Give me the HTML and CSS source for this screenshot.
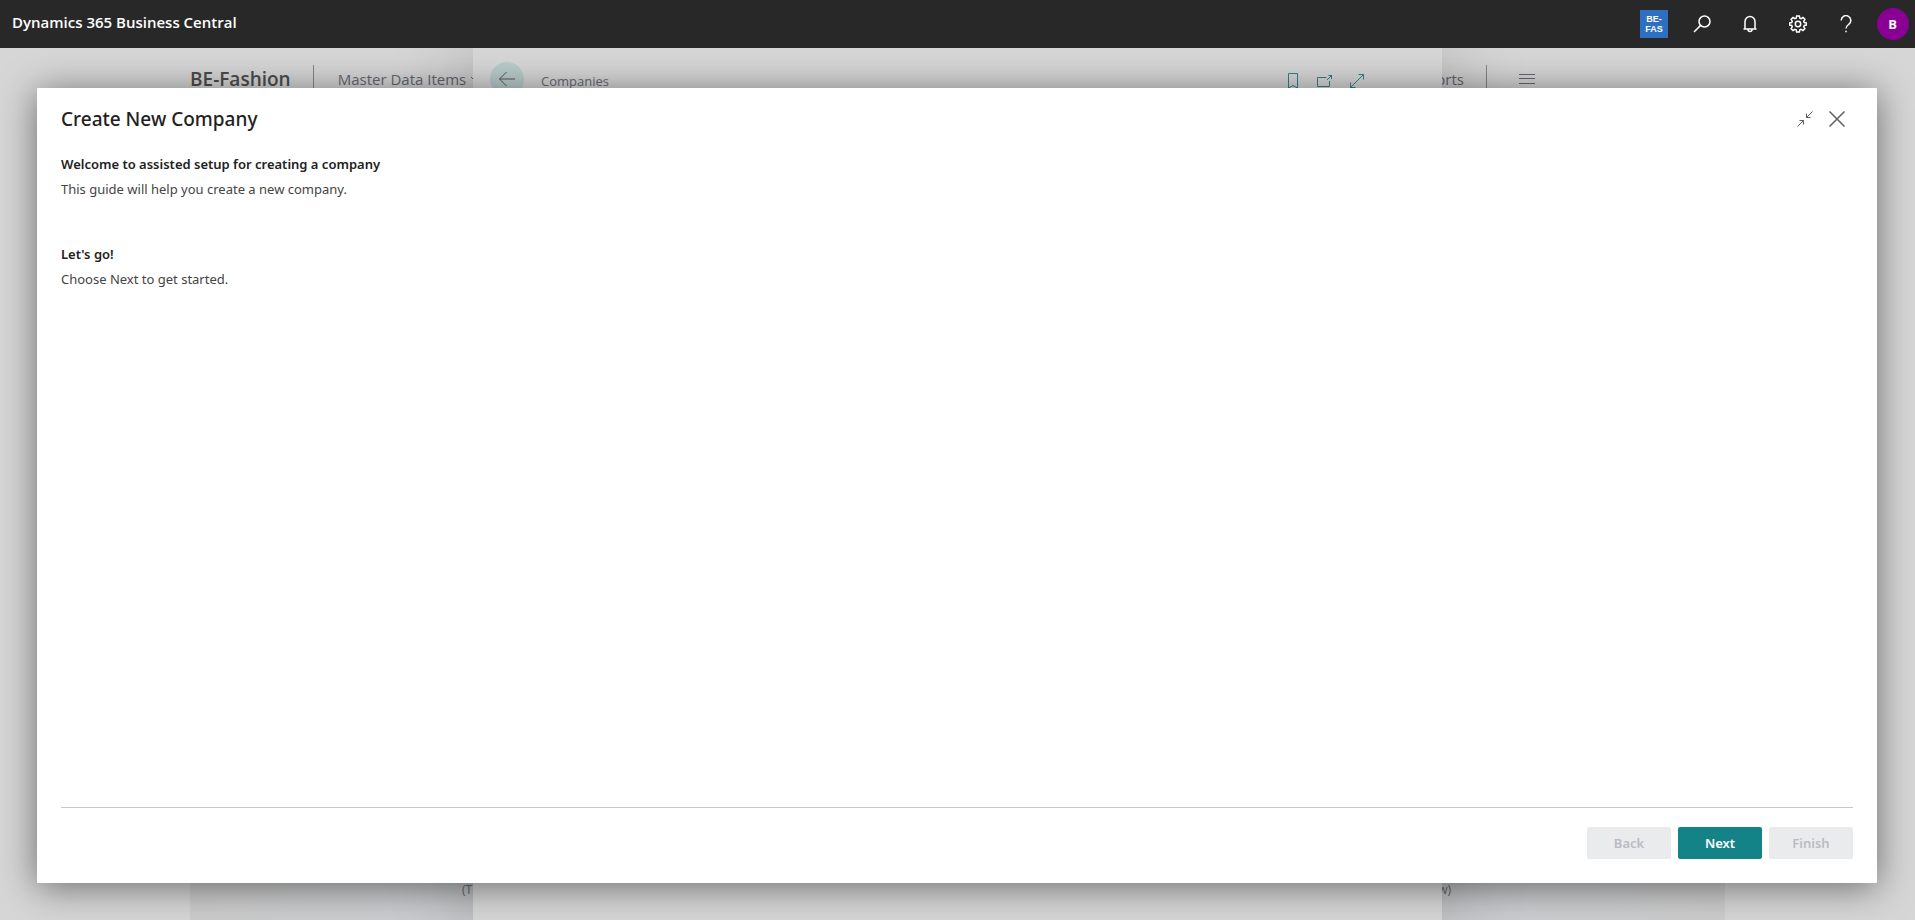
FILE: index.html
```
<!DOCTYPE html>
<html lang="en">
<head>
  <meta charset="UTF-8" />
  <meta name="viewport" content="width=device-width, initial-scale=1.0"/>
  <title>Dynamics 365 Business Central</title>
  <link rel="stylesheet" href="styles.css">
</head>
<body>

<header class="topbar">
  <a class="product" href="#">Dynamics 365 Business Central</a>
  <div class="tools">
    <button class="tool" type="button" aria-label="Company"><span class="company-badge"><span>BE-</span><span>FAS</span></span></button>
    <button class="tool" type="button" aria-label="Search">
      <svg width="18" height="18" viewBox="0 0 18 18"><circle cx="11.5" cy="6.5" r="5.5"/><path d="M7.6 10.4L1 17"/></svg>
    </button>
    <button class="tool" type="button" aria-label="Notifications">
      <svg width="18" height="18" viewBox="0 0 18 18"><path d="M4 14V6.500a5 5 0 0 1 10 0V14M2.500 14h13M7 14.500a2 2 0 0 0 4 0"/></svg>
    </button>
    <button class="tool" type="button" aria-label="Settings">
      <svg width="18" height="18" viewBox="0 0 18 18"><path d="M7.600 1h2.800l.4 2.200 1.300.5 1.900-1.200 1.900 1.900-1.200 1.900.6 1.300 2.200.4v2l-2.200.5-.6 1.300 1.200 1.900-1.900 1.900-1.900-1.200-1.300.5-.4 2.200H7.600l-.4-2.200-1.300-.5L4 15.600l-1.900-1.900 1.200-1.900-.6-1.300L.5 10V8l2.200-.4.6-1.300-1.200-1.900L4 2.500l1.900 1.200 1.300-.5z"/><circle cx="9" cy="9" r="2.700"/></svg>
    </button>
    <button class="tool" type="button" aria-label="Help">
      <svg width="18" height="18" viewBox="0 0 18 18"><path d="M4.200 5.500a4.800 4.800 0 1 1 7.800 3.700C10.200 10.700 9 11.300 9 13.500M9 15.800v1.400"/></svg>
    </button>
    <button class="tool" type="button" aria-label="Account"><span class="avatar">B</span></button>
  </div>
</header>

<main class="stage">

  <!-- role center -->
  <div class="home">
    <nav class="home-nav">
      <a class="company" href="#">BE-Fashion</a>
      <span class="divider"></span>
      <a class="menu-item" href="#">Master Data Items
        <svg width="10" height="10" viewBox="0 0 10 10"><path d="M1 3l4 4 4-4"/></svg>
      </a>
      <a class="menu-item last" href="#">Reports</a>
      <span class="divider"></span>
      <button class="more" type="button" aria-label="More">
        <svg width="16" height="10" viewBox="0 0 16 10"><path d="M0 .5h16M0 4.500h16M0 9.500h16"/></svg>
      </button>
    </nav>
    <div class="banner">
      <span>(Th</span>
      <span>w)</span>
    </div>
  </div>

  <!-- companies list -->
  <section class="panel">
    <button class="back" type="button" aria-label="Go back">
      <svg width="18" height="16" viewBox="0 0 18 16"><path d="M17 8H1.500M8.500 1l-7 7 7 7"/></svg>
    </button>
    <span class="panel-title">Companies</span>
    <div class="panel-tools">
      <button type="button" aria-label="Bookmark"><svg width="16" height="16" viewBox="0 0 16 16"><path d="M3.500.5h9v14.500L8 12.500 3.500 15z"/></svg></button>
      <button type="button" aria-label="Open in new window"><svg width="16" height="16" viewBox="0 0 16 16"><path d="M9.500 4.500h-9v9h12V8M10 7l5-5M11.500 2.500h3V6"/></svg></button>
      <button type="button" aria-label="Expand"><svg width="16" height="16" viewBox="0 0 16 16"><path d="M1.500 14.500l13-13M9.500 1.500h5v5M1.500 9.500v5h5"/></svg></button>
    </div>
  </section>

  <!-- assisted setup -->
  <div class="dialog" role="dialog" aria-labelledby="dialogTitle">
    <div class="dialog-head">
      <h1 id="dialogTitle">Create New Company</h1>
      <button type="button" aria-label="Restore size"><svg width="16" height="16" viewBox="0 0 16 16"><path d="M.5 15.500L6.500 9.500M2.500 9.500h4v4M15.500.5L9.500 6.500M9.500 2.500v4h4"/></svg></button>
      <button type="button" aria-label="Close"><svg class="close" width="16" height="16" viewBox="0 0 16 16"><path d="M.5.5l15 15M15.500.5l-15 15"/></svg></button>
    </div>

    <div class="dialog-body">
      <section class="step">
        <h2>Welcome to assisted setup for creating a company</h2>
        <p>This guide will help you create a new company.</p>
      </section>
      <section class="step">
        <h2>Let's go!</h2>
        <p>Choose Next to get started.</p>
      </section>
    </div>

    <div class="dialog-foot">
      <button class="btn" type="button" disabled>Back</button>
      <button class="btn primary" type="button">Next</button>
      <button class="btn" type="button" disabled>Finish</button>
    </div>
  </div>

</main>

</body>
</html>
```
FILE: styles.css
```
* {
  box-sizing: border-box;
}

body {
  margin: 0;
  height: 100vh;
  display: flex;
  flex-direction: column;
  overflow: hidden;
  background: #d6d6d6;
  color: #212121;
  font-family: "Segoe UI", "Open Sans", "Noto Sans", sans-serif;
  font-size: 13px;
}

a {
  color: inherit;
  text-decoration: none;
}

button {
  padding: 0;
  border: 0;
  background: none;
  color: inherit;
  font: inherit;
  cursor: pointer;
}

svg {
  display: block;
  fill: none;
  stroke: currentColor;
}

/* top bar */
.topbar {
  height: 48px;
  flex: none;
  display: flex;
  align-items: center;
  justify-content: space-between;
  padding-left: 12px;
  background: #282828;
  color: #fff;
}

.product {
  font-size: 15px;
  font-weight: 600;
  line-height: 20px;
  padding-bottom: 4px;
}

.tools {
  display: flex;
}

.tool {
  width: 48px;
  height: 48px;
  display: flex;
  align-items: center;
  justify-content: center;
}

.tool svg {
  stroke-width: 1.5;
}

.company-badge {
  width: 28px;
  height: 28px;
  display: flex;
  flex-direction: column;
  justify-content: center;
  background: #2f6fc1;
  font-family: "Segoe UI", "Liberation Sans", sans-serif;
  font-size: 9px;
  font-weight: 600;
  line-height: 10px;
}

.avatar {
  width: 32px;
  height: 32px;
  border-radius: 50%;
  background: #8b0094;
  font-weight: 700;
  line-height: 32px;
}

.tools .tool:last-child {
  width: 45px;
}

/* page behind the dialog */
.stage {
  flex: 1;
  position: relative;
  overflow: hidden;
}

.home {
  height: 100%;
  display: flex;
  flex-direction: column;
  justify-content: space-between;
}

.home-nav {
  display: flex;
  align-items: center;
  height: 62px;
  padding: 0 380px 0 190px;
  color: #666872;
  font-size: 15px;
}

.company {
  color: #4c4c4c;
  font-size: 19px;
  font-weight: 600;
}

.divider {
  width: 1px;
  height: 28px;
  margin: 0 24px 0 22px;
  background: #85858c;
}

.menu-item {
  display: flex;
  align-items: center;
  gap: 4px;
}

.last {
  margin-left: auto;
}

.more {
  margin-left: 8px;
}

.banner {
  height: 60px;
  display: flex;
  justify-content: space-between;
  margin: 0 190px;
  padding: 21px 274px 0 272px;
  background: linear-gradient(90deg, #ccc, #cbcdd0 15%, #c8cac9 30%, #c8cac9 70%, #cbcdd0 85%, #ccc);
  color: #6c6c6c;
  font-size: 12px;
}

.panel {
  position: absolute;
  inset: 0 24.7%;
  display: flex;
  align-items: flex-start;
  padding: 14px 77px 0 17px;
  background: #d6d6d6;
  box-shadow: 0 0 80px rgba(0, 0, 0, 0.22);
}

.back {
  width: 34px;
  height: 34px;
  display: flex;
  align-items: center;
  justify-content: center;
  border-radius: 50%;
  background: #b9cbcc;
  color: #555;
}

.panel-title {
  margin-left: 17px;
  color: #666872;
  font-size: 13px;
  line-height: 38px;
}

.panel-tools {
  display: flex;
  gap: 16px;
  margin-left: auto;
  padding-top: 11px;
  color: #2f8185;
}

/* dialog */
.dialog {
  position: absolute;
  inset: 40px 38px 37px 37px;
  display: flex;
  flex-direction: column;
  padding: 0 24px 24px;
  border-radius: 1px;
  background: #fff;
  box-shadow: 0 4px 36px rgba(0, 0, 0, 0.5);
  font-family: "Segoe UI", "Noto Sans", sans-serif;
}

.dialog-head {
  display: flex;
  align-items: center;
  gap: 16px;
  height: 62px;
  padding-right: 8px;
  color: #5f5f5f;
}

.dialog-head h1 {
  flex: 1;
  margin: 0;
  color: #212121;
  font-size: 19px;
  font-weight: 500;
}

.close {
  stroke-width: 1.5;
}

.dialog-body {
  flex: 1;
  padding-top: 2px;
}

.step {
  margin-bottom: 40px;
}

.step h2,
.step p {
  margin: 0;
  font-size: 13px;
  line-height: 25px;
}

.step h2 {
  font-weight: 600;
}

.step p {
  color: #444;
}

.dialog-foot {
  display: flex;
  justify-content: flex-end;
  gap: 7px;
  padding-top: 19px;
  border-top: 1px solid #c8c8c8;
}

.btn {
  width: 84px;
  height: 32px;
  border-radius: 2px;
  background: #eaebed;
  color: #babbc2;
  font-weight: 600;
}

.primary {
  background: #148387;
  color: #fff;
}
```
